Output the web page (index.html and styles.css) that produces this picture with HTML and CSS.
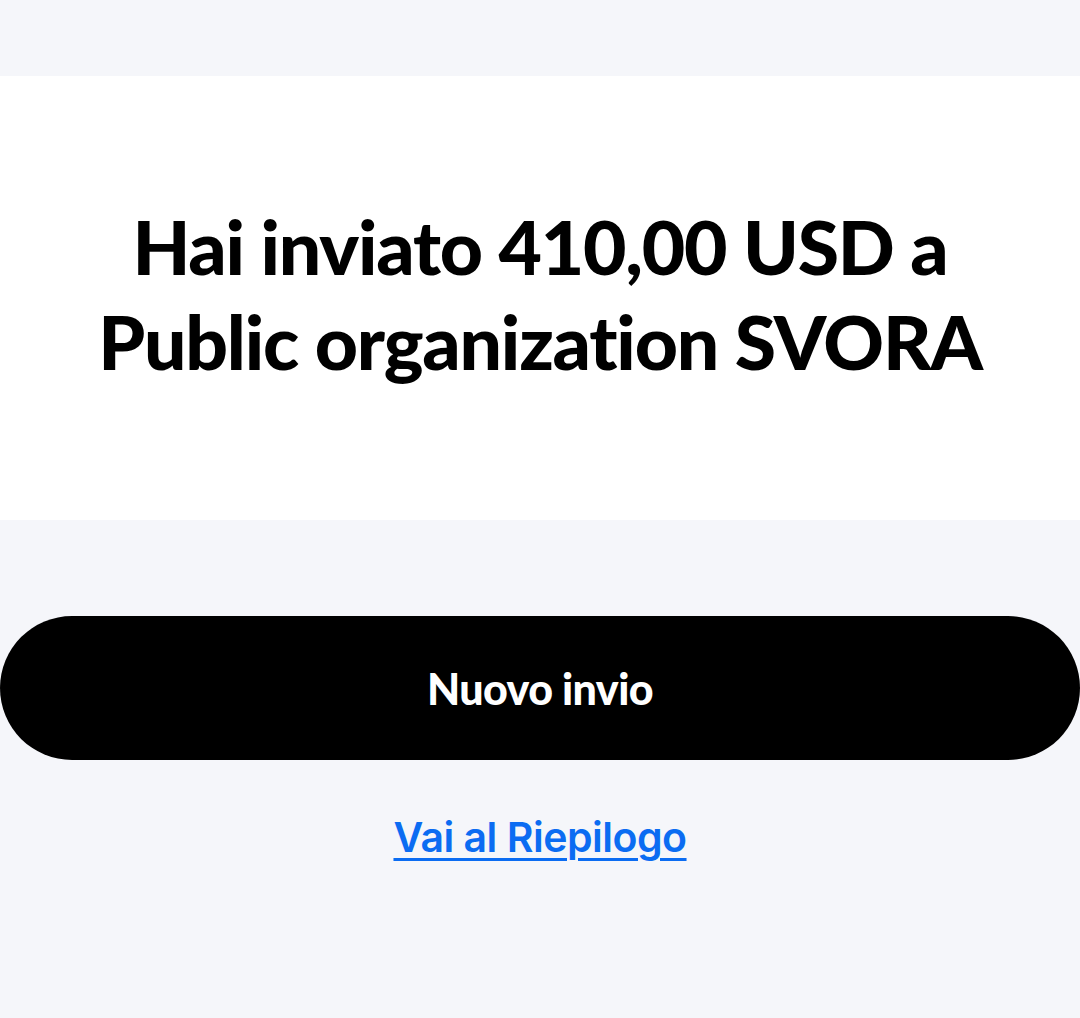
FILE: index.html
```html
<!DOCTYPE html>
<html lang="it">
<head>
  <meta charset="UTF-8">
  <title>Invio completato</title>
  <link rel="stylesheet" href="styles.css">
</head>
<body>
  <div class="top-bar"></div>

  <section class="hero">
    <h1>Hai inviato 410,00 USD a<br>Public organization SVORA</h1>
  </section>

  <div class="actions">
    <button class="btn-primary" type="button">Nuovo invio</button>
    <a class="summary-link" href="#">Vai al Riepilogo</a>
  </div>
</body>
</html>
```

FILE: styles.css
```css
:root {
  --bg-grey: #f5f6fa;
  --text-dark: #000000;
  --link-blue: #0b6cf2;
}
* {
  box-sizing: border-box;
  margin: 0;
  padding: 0;
}
body {
  background-color: var(--bg-grey);
  color: var(--text-dark);
  font-family: 'Lato', sans-serif;
  width: 1080px;
  height: 1018px;
  overflow: hidden;
}
.top-bar {
  height: 76px;
}
.hero {
  background: #ffffff;
  height: 444px;
  display: flex;
  align-items: center;
  justify-content: center;
  text-align: center;
}
.hero h1 {
  font-size: 75px;
  font-weight: 900;
  line-height: 95px;
  letter-spacing: -1.2px;
  padding-bottom: 8px;
}
.actions {
  display: flex;
  flex-direction: column;
  align-items: center;
  padding-top: 96px;
}
.btn-primary {
  width: 100%;
  height: 144px;
  border: none;
  border-radius: 72px;
  background: #000000;
  color: #ffffff;
  font-family: 'Lato', sans-serif;
  font-weight: 900;
  font-size: 43px;
  letter-spacing: -0.6px;
}
.summary-link {
  margin-top: 52px;
  color: var(--link-blue);
  font-family: 'Inter', sans-serif;
  font-size: 41px;
  font-weight: 600;
  letter-spacing: -0.5px;
  text-decoration: underline;
  text-decoration-thickness: 3px;
  text-underline-offset: 6px;
}
```
